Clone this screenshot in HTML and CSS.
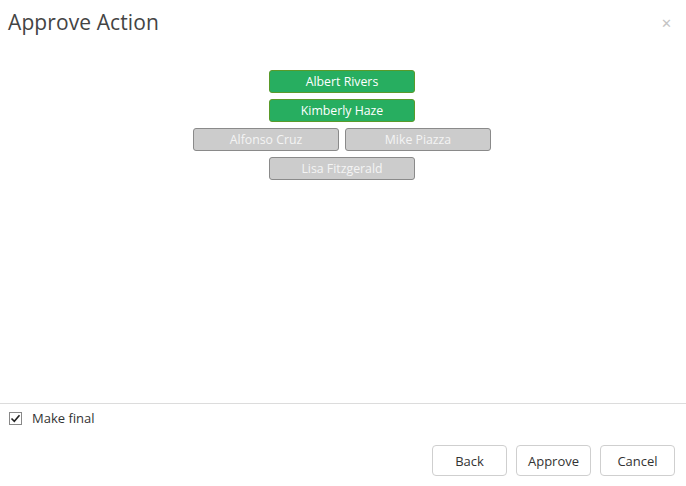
FILE: index.html
```html
<!DOCTYPE html>
<html>
<head>
<meta charset="utf-8">
<link rel="stylesheet" href="styles.css">
</head>
<body>
<div class="dialog">
  <div class="header">
    <h1 class="title">Approve Action</h1>
    <span class="close">&#x2715;</span>
  </div>
  <div class="content">
    <div class="row"><span class="person on">Albert Rivers</span></div>
    <div class="row"><span class="person on">Kimberly Haze</span></div>
    <div class="row"><span class="person off">Alfonso Cruz</span><span class="person off">Mike Piazza</span></div>
    <div class="row"><span class="person off">Lisa Fitzgerald</span></div>
  </div>
  <div class="footer">
    <label class="check">
      <span class="box"><svg width="11" height="11" viewBox="0 0 11 11"><path d="M1.5 5.5 L4.3 8.3 L9.5 2.2" fill="none" stroke="#222" stroke-width="1.6"/></svg></span>
      <span>Make final</span>
    </label>
    <div class="actions">
      <button class="btn">Back</button>
      <button class="btn">Approve</button>
      <button class="btn">Cancel</button>
    </div>
  </div>
</div>
</body>
</html>
```
FILE: styles.css
```css
html, body {
  margin: 0;
  padding: 0;
  background: #fff;
}
body {
  font-family: "Open Sans", "Noto Sans", sans-serif;
  color: #333;
}
.dialog {
  width: 686px;
  height: 486px;
  display: flex;
  flex-direction: column;
}
.header {
  display: flex;
  justify-content: space-between;
  align-items: center;
  height: 44px;
  padding: 0 14px 0 8px;
}
.title {
  margin: 0;
  font-size: 21px;
  font-weight: 400;
  color: #444;
  letter-spacing: 0.1px;
}
.close {
  font-size: 13px;
  color: #c4c4c4;
  margin-top: 2px;
}
.content {
  flex: 1;
  display: flex;
  flex-direction: column;
  align-items: center;
  gap: 6px;
  padding-top: 26px;
  padding-right: 2px;
}
.row {
  display: flex;
  gap: 6px;
}
.person {
  box-sizing: border-box;
  width: 146px;
  height: 23px;
  border-radius: 3px;
  font-size: 12.3px;
  display: flex;
  align-items: center;
  justify-content: center;
  color: #fff;
}
.person.on {
  background: #27ae60;
  border: 1px solid #5a9a2a;
}
.person.off {
  background: #cccccc;
  border: 1px solid #8a8a8a;
  color: #f4f4f4;
}
.footer {
  border-top: 1px solid #dcdcdc;
  padding: 6px 11px 10px 9px;
}
.check {
  display: flex;
  align-items: center;
  gap: 10px;
  font-size: 13px;
  color: #333;
  height: 16px;
}
.box {
  box-sizing: border-box;
  width: 13px;
  height: 13px;
  border: 1px solid #888;
  display: flex;
  align-items: center;
  justify-content: center;
  background: #fff;
}
.actions {
  display: flex;
  justify-content: flex-end;
  gap: 9px;
  margin-top: 19px;
}
.btn {
  box-sizing: border-box;
  width: 75px;
  height: 31px;
  border: 1px solid #cfcfcf;
  border-radius: 4px;
  background: #fff;
  font-family: "Open Sans", "Noto Sans", sans-serif;
  font-size: 13px;
  color: #333;
  padding: 0;
}
```
